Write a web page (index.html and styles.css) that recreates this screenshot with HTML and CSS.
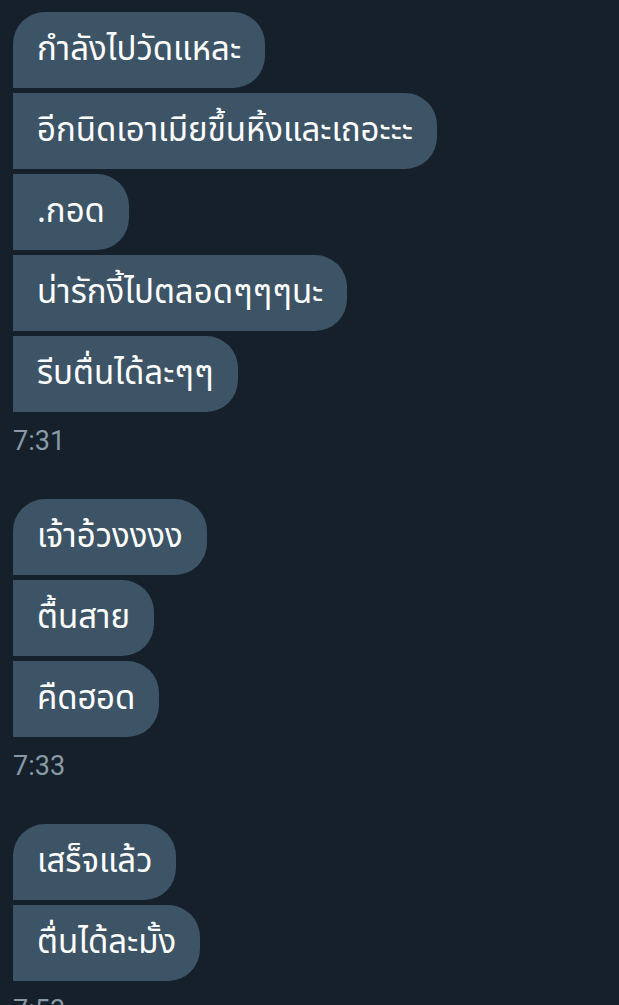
FILE: index.html
```html
<!DOCTYPE html>
<html lang="th">
<head>
<meta charset="utf-8">
<link rel="stylesheet" href="styles.css">
</head>
<body>
<div class="chat">
  <div class="group">
    <div class="bubble first">กำลังไปวัดแหละ</div>
    <div class="bubble">อีกนิดเอาเมียขึ้นหิ้งและเถอะะะ</div>
    <div class="bubble">.กอด</div>
    <div class="bubble">น่ารักงี้ไปตลอดๆๆๆนะ</div>
    <div class="bubble last">รีบตื่นได้ละๆๆ</div>
    <div class="time">7:31</div>
  </div>
  <div class="group">
    <div class="bubble first">เจ้าอ้วงงงง</div>
    <div class="bubble">ตื้นสาย</div>
    <div class="bubble last">คืดฮอด</div>
    <div class="time">7:33</div>
  </div>
  <div class="group">
    <div class="bubble first">เสร็จแล้ว</div>
    <div class="bubble last">ตื่นได้ละมั้ง</div>
    <div class="time">7:53</div>
  </div>
</div>
</body>
</html>
```
FILE: styles.css
```css
html, body {
  margin: 0;
  padding: 0;
  background: #15202b;
  height: 100%;
  overflow: hidden;
}
.chat {
  padding: 12px 0 0 13px;
  display: flex;
  flex-direction: column;
  gap: 39px;
  font-family: "Noto Sans Thai", "Noto Sans", Roboto, sans-serif;
}
.group {
  display: flex;
  flex-direction: column;
  align-items: flex-start;
  gap: 5px;
}
.bubble {
  background: #3d5466;
  color: #ffffff;
  font-size: 33px;
  line-height: 76px;
  height: 76px;
  padding: 0 24px 0 24px;
  border-radius: 0 32px 32px 0;
  white-space: nowrap;
}
.bubble.first {
  border-top-left-radius: 32px;
}
.time {
  font-family: Roboto, "Noto Sans", sans-serif;
  color: #8899a6;
  font-size: 27px;
  line-height: 38px;
  margin-top: 5px;
}
```
